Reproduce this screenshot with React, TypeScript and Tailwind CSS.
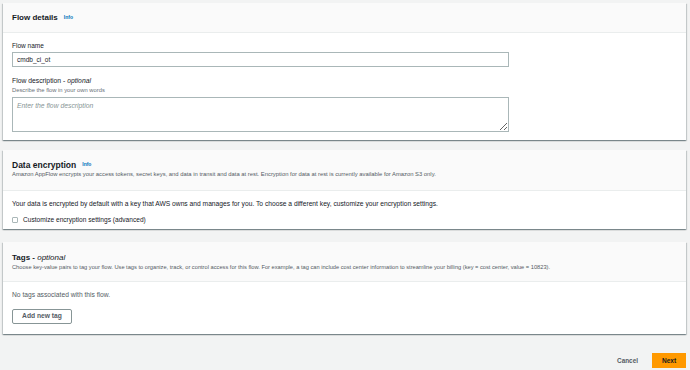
const card =
  "bg-white shadow-[0_1px_1px_0_rgba(0,28,36,0.3),1px_1px_1px_0_rgba(0,28,36,0.15),-1px_1px_1px_0_rgba(0,28,36,0.15)]";

function InfoLink() {
  return <span className="ml-[6px] text-[5px] font-bold text-[#0073bb]">Info</span>;
}

export default function App() {
  return (
    <div className="w-[690px] h-[370px] overflow-hidden bg-[#f2f3f3] pl-[3px] pr-[4px] pt-[3px] font-['Liberation_Sans',Arial,sans-serif] text-[#16191f]">
      {/* Flow details */}
      <div className={card}>
        <div className="h-[30px] flex items-center px-[9px] bg-[#fafafa] border-b border-[#eaeded]">
          <span className="text-[8px] leading-[12px] font-bold">Flow details</span>
          <InfoLink />
        </div>
        <div className="px-[9px] pt-[8px] pb-[8px]">
          <div className="text-[6.5px] leading-[10px]">Flow name</div>
          <div className="mt-[1px] w-[497px] h-[15px] border border-[#aab7b8] flex items-center px-[4px] text-[6.5px]">
            cmdb_ci_ot
          </div>
          <div className="mt-[9px] text-[6.8px] leading-[10px]">
            Flow description - <i>optional</i>
          </div>
          <div className="text-[5.8px] leading-[8px] text-[#687078]">Describe the flow in your own words</div>
          <textarea
            className="mt-[3px] block w-[497px] h-[35px] border border-[#aab7b8] px-[4px] py-[3px] text-[6.8px] leading-[9px] placeholder:italic placeholder:text-[#879596] outline-none"
            placeholder="Enter the flow description"
          />
        </div>
      </div>

      {/* Data encryption */}
      <div className={`${card} mt-[10px]`}>
        <div className="px-[9px] pt-[9px] pb-[13px] bg-[#fafafa] border-b border-[#eaeded]">
          <div className="flex items-center h-[12px]">
            <span className="text-[8.5px] font-bold">Data encryption</span>
            <InfoLink />
          </div>
          <div className="text-[5.85px] leading-[6px] text-[#545b64]">
            Amazon AppFlow encrypts your access tokens, secret keys, and data in transit and data at rest. Encryption for data at rest is currently available for Amazon S3 only.
          </div>
        </div>
        <div className="px-[9px] pt-[8px] pb-[4px]">
          <div className="text-[6.7px] leading-[10px]">
            Your data is encrypted by default with a key that AWS owns and manages for you. To choose a different key, customize your encryption settings.
          </div>
          <div className="mt-[6px] h-[10px] flex items-center gap-[5px]">
            <span className="w-[6px] h-[6px] border border-[#aab7b8] rounded-[1px] bg-white" />
            <span className="text-[6.6px]">Customize encryption settings (advanced)</span>
          </div>
        </div>
      </div>

      {/* Tags */}
      <div className={`${card} mt-[13px]`}>
        <div className="px-[9px] pt-[10px] pb-[11px] bg-[#fafafa] border-b border-[#eaeded]">
          <div className="h-[12px] flex items-center text-[8px]">
            <span className="font-bold">Tags -&nbsp;</span>
            <i>optional</i>
          </div>
          <div className="text-[5.7px] leading-[6px] text-[#545b64] whitespace-nowrap">
            Choose key-value pairs to tag your flow. Use tags to organize, track, or control access for this flow. For example, a tag can include cost center information to streamline your billing (key = cost center, value = 10823).
          </div>
        </div>
        <div className="px-[9px] pt-[8px] pb-[9px]">
          <div className="text-[6.7px] leading-[10px] text-[#545b64]">No tags associated with this flow.</div>
          <button className="mt-[9px] w-[60px] h-[15px] border border-[#879596] rounded-[2px] bg-white text-[6.7px] font-bold text-[#545b64]">
            Add new tag
          </button>
        </div>
      </div>

      {/* Footer */}
      <div className="mt-[19px] flex items-center justify-end gap-[14px]">
        <span className="text-[6.4px] font-bold text-[#545b64]">Cancel</span>
        <button className="w-[34px] h-[15px] bg-[#ff9900] text-[6.5px] font-bold text-[#16191f]">Next</button>
      </div>
    </div>
  );
}
